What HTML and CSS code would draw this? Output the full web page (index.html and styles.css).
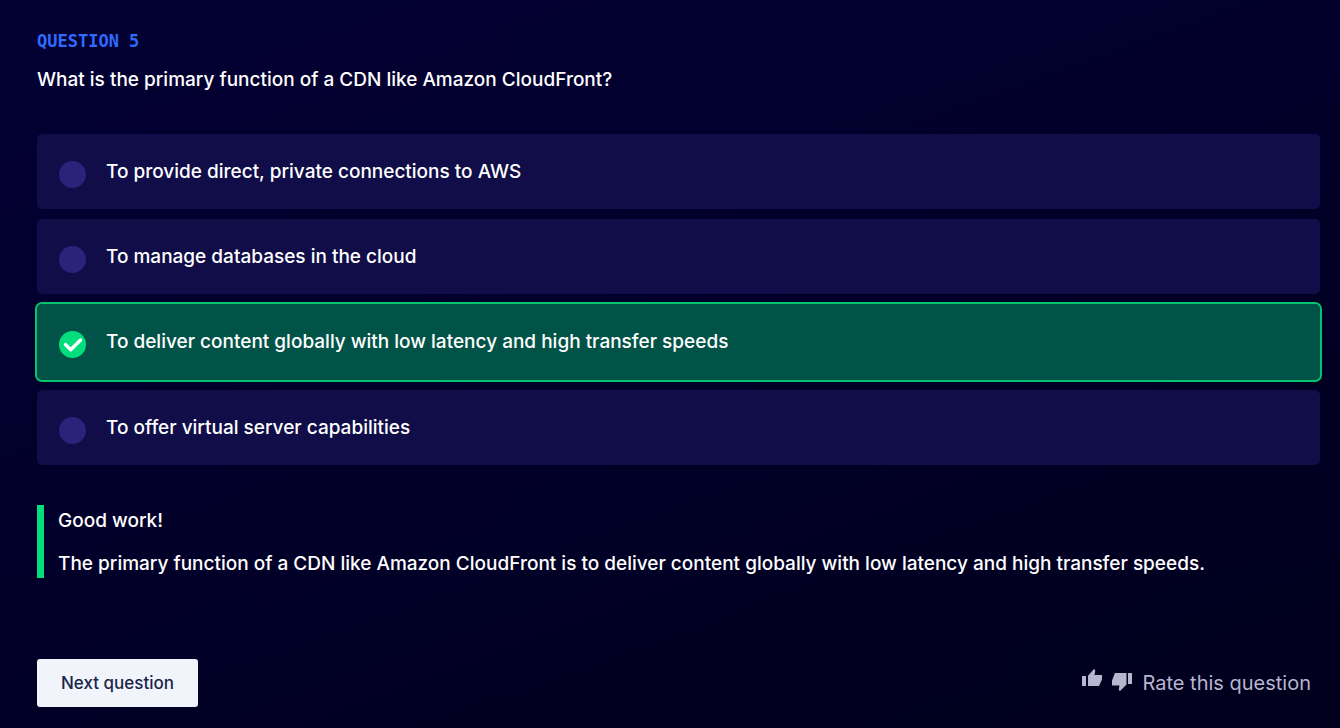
FILE: index.html
```html
<!DOCTYPE html>
<html lang="en">
<head>
<meta charset="utf-8">
<meta name="viewport" content="width=device-width, initial-scale=1">
<title>Question 5</title>
<link rel="stylesheet" href="styles.css">
</head>
<body>
<main class="quiz">
  <header class="heading">
    <p class="eyebrow">QUESTION 5</p>
    <h1 class="prompt" id="prompt">What is the primary function of a CDN like Amazon CloudFront?</h1>
  </header>
  <div class="options" role="radiogroup" aria-labelledby="prompt">
    <label class="option"><span class="mark"><input class="radio" type="radio" name="answer"></span><span class="answer">To provide direct, private connections to AWS</span></label>
    <label class="option"><span class="mark"><input class="radio" type="radio" name="answer"></span><span class="answer">To manage databases in the cloud</span></label>
    <label class="option option-correct"><span class="mark"><input class="radio" type="radio" name="answer" checked><svg class="check" viewBox="0 0 27 27" aria-hidden="true"><path d="M6.500 13.500l5.300 5.300L21.500 9" fill="none" stroke="#fff" stroke-width="3.400" stroke-linejoin="round" stroke-linecap="round"/></svg></span><span class="answer">To deliver content globally with low latency and high transfer speeds</span></label>
    <label class="option"><span class="mark"><input class="radio" type="radio" name="answer"></span><span class="answer">To offer virtual server capabilities</span></label>
  </div>
  <section class="feedback">
    <p>Good work!</p>
    <p>The primary function of a CDN like Amazon CloudFront is to deliver content globally with low latency and high transfer speeds.</p>
  </section>
  <footer class="actions">
    <button class="next" type="button">Next question</button>
    <div class="rate">
      <button class="thumb thumb-up" type="button" aria-label="Thumbs up"><svg viewBox="0 0 20 18" aria-hidden="true"><path d="M0 7h4v10H0zM6 17V6.800L12 0l1.300 1.200-.8 4.800H20v4.500L17 17z"/></svg></button>
      <button class="thumb thumb-down" type="button" aria-label="Thumbs down"><svg viewBox="0 0 20 18" aria-hidden="true"><path d="M16 0h4v11h-4zM14.500 0v11.500L8 18l-1.300-1.200.8-4.300H0v-5L3 0z"/></svg></button>
      <span>Rate this question</span>
    </div>
  </footer>
</main>
</body>
</html>
```
FILE: styles.css
```css
* {
  box-sizing: border-box;
}

body {
  margin: 0;
  min-height: 100vh;
  background: linear-gradient(160deg, #030034 0%, #02002a 45%, #00001c 100%);
  color: #fff;
  font: 500 19px/28px Inter, "Liberation Sans", sans-serif;
}

p,
h1 {
  margin: 0;
}

.quiz {
  padding: 28px 20px 21px 37px;
}

.eyebrow {
  color: #2f6bff;
  font: 700 17px/26px "DejaVu Sans Mono", monospace;
}

.prompt {
  margin-top: 12px;
  font: inherit;
}

.options {
  display: grid;
  gap: 10px;
  margin-top: 40px;
}

.option {
  display: flex;
  align-items: flex-start;
  gap: 20px;
  min-height: 75px;
  padding: 24px 22px 20px;
  border-radius: 5px;
  background: #110d48;
}

.option-correct {
  min-height: 76px;
  background: #025347;
  outline: 2px solid #04c56e;
}

.mark {
  display: grid;
  flex: none;
  margin-top: 3px;
}

.radio,
.check {
  grid-area: 1 / 1;
  width: 27px;
  height: 27px;
  margin: 0;
}

.radio {
  appearance: none;
  border-radius: 50%;
  background: #2b227c;
}

.radio:checked {
  background: #03de7d;
}

.check {
  z-index: 1;
  pointer-events: none;
}

.feedback {
  display: grid;
  gap: 15px;
  margin-top: 40px;
  padding: 2px 0 0 14px;
  border-left: 7px solid #03de7d;
}

.actions {
  display: flex;
  align-items: center;
  justify-content: space-between;
  margin-top: 81px;
}

.next {
  padding: 10px 24px;
  border: 0;
  border-radius: 3px;
  background: #f1f4fa;
  color: #192649;
  font: 500 17px/28px Inter, "Liberation Sans", sans-serif;
}

.rate {
  display: flex;
  align-items: center;
  gap: 10px;
  padding-right: 9px;
  color: #b8b5cf;
  font-size: 20px;
  font-weight: 400;
}

.thumb {
  width: 20px;
  padding: 0;
  border: 0;
  background: none;
  color: inherit;
}

.thumb svg {
  display: block;
  width: 20px;
  height: 18px;
  fill: currentColor;
}

.thumb-up {
  margin-bottom: 10px;
}

.thumb-down {
  margin-bottom: 2px;
}
```
